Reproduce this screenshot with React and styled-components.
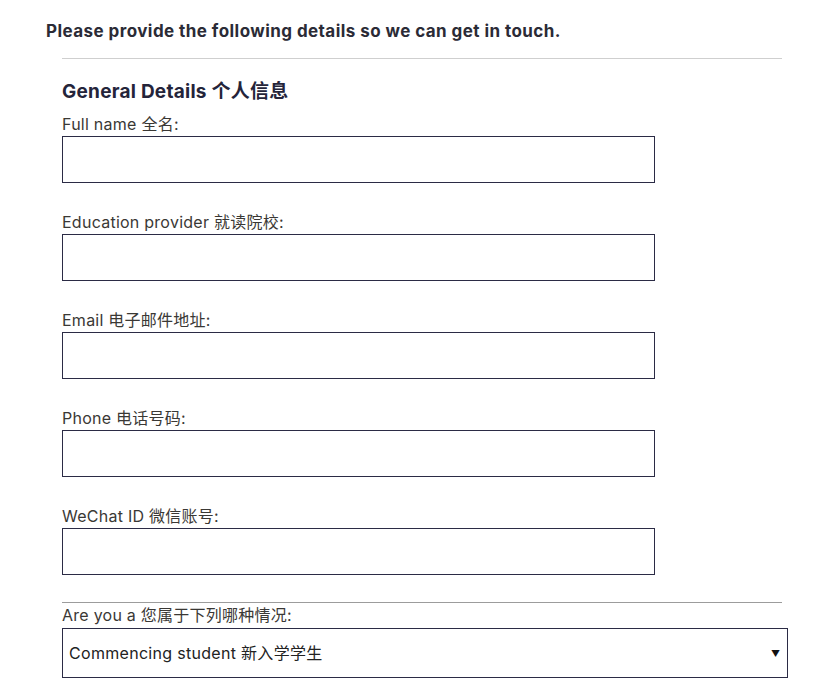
import React from 'react'
import styled, { createGlobalStyle } from 'styled-components'

const GlobalStyle = createGlobalStyle`
  body {
    margin: 0;
    background: #fff;
    font-family: Inter, "Noto Sans CJK SC", sans-serif;
  }
`

const Page = styled.div`
  padding: 21px 0 0 46px;
`

const Intro = styled.p`
  margin: 0;
  font-size: 17px;
  line-height: 20px;
  font-weight: 700;
  letter-spacing: 0.44px;
  color: #2b2b36;
`

const Section = styled.section`
  margin: 17px 0 0 16px;
  width: 720px;
  border-top: 1px solid #cfcfcf;
`

const Heading = styled.h2`
  margin: 21px 0 10px;
  font-size: 19px;
  line-height: 24px;
  font-weight: 700;
  letter-spacing: 0.25px;
  color: #24243a;
`

const Field = styled.div`
  margin-bottom: ${p => (p.last ? '27px' : '29px')};
`

const Label = styled.label`
  display: block;
  font-size: 16px;
  line-height: 20px;
  letter-spacing: 0.25px;
  color: #3a3835;
  margin-bottom: 2px;
`

const Input = styled.input`
  display: block;
  box-sizing: border-box;
  width: 593px;
  height: 47px;
  border: 1px solid #2b2b45;
  border-radius: 0;
  padding: 0 8px;
  font: inherit;
`

const Divider = styled.div`
  border-top: 1px solid #9c9c9c;
  padding-top: 2px;
`

const SelectWrap = styled.div`
  position: relative;
  width: 726px;
  margin-top: 3px;
`

const Select = styled.select`
  display: block;
  box-sizing: border-box;
  width: 100%;
  height: 50px;
  border: 1px solid #2b2b45;
  border-radius: 0;
  background: #fff;
  appearance: none;
  padding: 0 6px;
  font-family: Inter, "Noto Sans CJK SC", sans-serif;
  font-size: 16px;
  letter-spacing: 0.3px;
  color: #222;
`

const Arrow = styled.span`
  position: absolute;
  right: 8px;
  top: 50%;
  transform: translateY(-50%);
  font-size: 9px;
  color: #111;
  pointer-events: none;
`

const fields = [
  'Full name 全名:',
  'Education provider 就读院校:',
  'Email 电子邮件地址:',
  'Phone 电话号码:',
  'WeChat ID 微信账号:',
]

const App = () => (
  <Page>
    <GlobalStyle />
    <Intro>Please provide the following details so we can get in touch.</Intro>
    <Section>
      <Heading>General Details 个人信息</Heading>
      {fields.map((f, i) => (
        <Field key={f} last={i === fields.length - 1}>
          <Label>{f}</Label>
          <Input type="text" />
        </Field>
      ))}
      <Divider>
        <Label>Are you a 您属于下列哪种情况:</Label>
        <SelectWrap>
          <Select defaultValue="c">
            <option value="c">Commencing student 新入学学生</option>
            <option value="e">Existing student 在读学生</option>
          </Select>
          <Arrow>▼</Arrow>
        </SelectWrap>
      </Divider>
    </Section>
  </Page>
)

export default App
